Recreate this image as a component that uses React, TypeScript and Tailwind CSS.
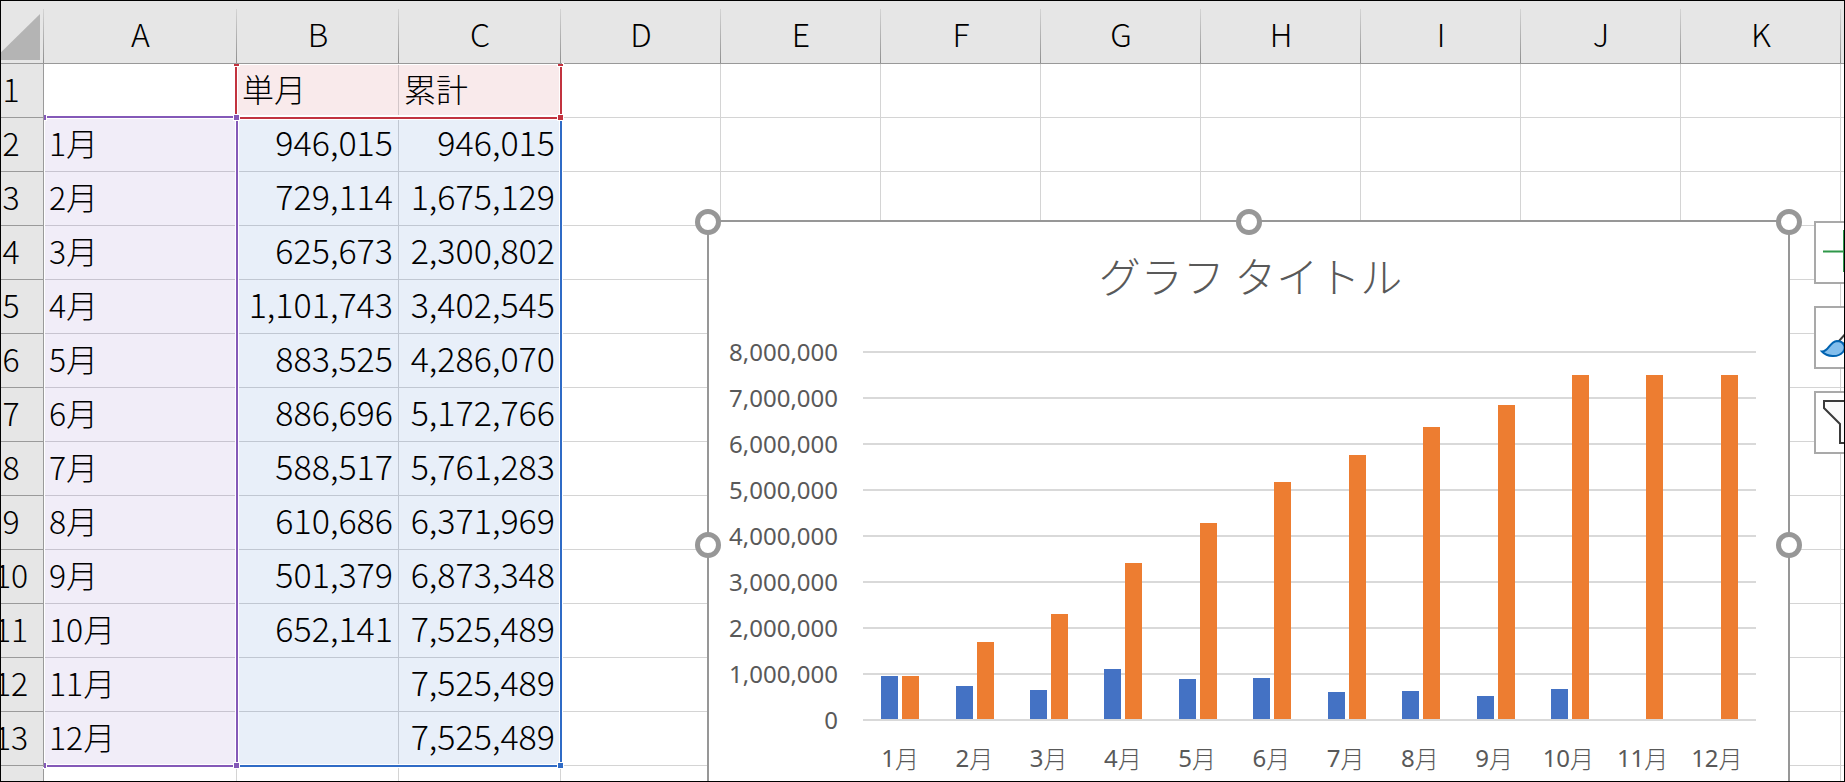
import { clsx } from "clsx";

// The last column only shows its left edge, so it carries no letter
const columns = ["A", "B", "C", "D", "E", "F", "G", "H", "I", "J", "K", ""];

const sales = [
    { month: "1月", single: 946015, total: 946015 },
    { month: "2月", single: 729114, total: 1675129 },
    { month: "3月", single: 625673, total: 2300802 },
    { month: "4月", single: 1101743, total: 3402545 },
    { month: "5月", single: 883525, total: 4286070 },
    { month: "6月", single: 886696, total: 5172766 },
    { month: "7月", single: 588517, total: 5761283 },
    { month: "8月", single: 610686, total: 6371969 },
    { month: "9月", single: 501379, total: 6873348 },
    { month: "10月", single: 652141, total: 7525489 },
    { month: "11月", single: null, total: 7525489 },
    { month: "12月", single: null, total: 7525489 },
];

const AXIS_MAX = 8000000;
const ticks = [8, 7, 6, 5, 4, 3, 2, 1, 0].map((n) => n * 1000000);

const format = (value: number | null) => (value === null ? "" : value.toLocaleString("en-US"));

const rows = [
    ["", "単月", "累計"],
    ...sales.map((s) => [s.month, format(s.single), format(s.total)]),
    ["", "", ""],
];

// Fill of a cell that belongs to one of the chart's source ranges
const cellStyle = (row: number, col: number) => {
    if (row === 0 && (col === 1 || col === 2)) return "bg-[#f9eaeb] border-[#d2c6c8]";
    if (row > 0 && row < 13 && col === 0) return "bg-[#f1edf8] border-[#c8c4d0]";
    if (row > 0 && row < 13 && col < 3) return "bg-[#e8eff9] border-[#c0c7d2]";
    return "bg-white border-[#d4d4d4]";
};

const Grid = () => (
    <table className="-ml-[21px] w-[2022px] table-fixed border-separate border-spacing-0 text-[32px] leading-[46px] text-black">
        <colgroup>
            <col className="w-[65px]" />
            <col className="w-[193px]" />
            <col className="w-[162px]" />
            <col className="w-[162px]" />
            {columns.slice(3).map((name) => (
                <col key={name} className="w-[160px]" />
            ))}
        </colgroup>
        <thead>
            <tr>
                <th className="h-16 border-b border-[#999999] bg-[#e6e6e6] bg-[linear-gradient(to_bottom,#d4d4d4,#8f8f8f)] bg-[length:1px_54px] bg-[position:right_bottom] bg-no-repeat p-0">
                    <button type="button" aria-label="すべて選択" className="flex h-[63px] w-[61px] items-end justify-end pb-[3px]">
                        <svg width="47" height="46" viewBox="0 0 47 46" className="block">
                            <path d="M47 0V46H0Z" fill="#b4b4b4" />
                        </svg>
                    </button>
                </th>
                {columns.map((name) => (
                    <th
                        key={name}
                        scope="col"
                        className="h-16 border-b border-[#999999] bg-[#e6e6e6] bg-[linear-gradient(to_bottom,#d4d4d4,#8f8f8f)] bg-[length:1px_54px] bg-[position:right_bottom] bg-no-repeat p-0 pt-0.5 text-center font-light"
                    >
                        {name}
                    </th>
                ))}
            </tr>
        </thead>
        <tbody>
            {rows.map((row, r) => (
                <tr key={r}>
                    <th scope="row" className="h-[54px] border-r border-b border-[#9a9a9a] bg-[#e6e6e6] p-0 pb-1.5 text-center font-light">
                        {r + 1}
                    </th>
                    {columns.map((name, c) => (
                        <td
                            key={name}
                            className={clsx(
                                "h-[54px] border-r border-b px-[5px] pt-0 pb-1.5 font-light whitespace-nowrap",
                                r > 0 && c > 0 && "text-right text-[34px]",
                                cellStyle(r, c)
                            )}
                        >
                            {row[c]}
                        </td>
                    ))}
                </tr>
            ))}
        </tbody>
    </table>
);

// Coloured outlines and grips of the three source ranges
const RangeOutlines = () => (
    <div className="pointer-events-none absolute top-16 left-11 grid grid-cols-[194px_324px] grid-rows-[52px_651px]">
        <div className="relative col-start-2 row-start-1 z-10 -mb-[3px] -ml-[3px] border-x-2 border-b-2 border-[#c2333f] ring-1 inset-ring-1 ring-white inset-ring-white">
            <span className="absolute top-0 -left-[3px] h-0.5 w-[5px] bg-[#c2333f] ring-1 ring-white" />
            <span className="absolute top-0 -right-[3px] h-0.5 w-[5px] bg-[#c2333f] ring-1 ring-white" />
            <span className="absolute -right-[3px] -bottom-[3px] size-[5px] bg-[#c2333f] ring-1 ring-white" />
        </div>
        <div className="relative col-start-1 row-start-2 z-20 border-y-2 border-r-2 border-[#8459b8] ring-1 inset-ring-1 ring-white inset-ring-white">
            <span className="absolute -top-[3px] left-0 h-[5px] w-0.5 bg-[#8459b8] ring-1 ring-white" />
            <span className="absolute -bottom-[3px] left-0 h-[5px] w-0.5 bg-[#8459b8] ring-1 ring-white" />
            <span className="absolute -top-[3px] -right-[3px] size-[5px] bg-[#8459b8] ring-1 ring-white" />
            <span className="absolute -right-[3px] -bottom-[3px] size-[5px] bg-[#8459b8] ring-1 ring-white" />
        </div>
        <div className="relative col-start-2 row-start-2 border-r-2 border-b-2 border-[#2f6bc6] ring-1 inset-ring-1 ring-white inset-ring-white">
            <span className="absolute -right-[3px] -bottom-[3px] size-[5px] bg-[#2f6bc6] ring-1 ring-white" />
        </div>
        {/* edges of the two header strips stay above the outlines */}
        <div className="absolute inset-x-0 -top-px z-30 h-px bg-[#999999]" />
        <div className="absolute inset-y-0 -left-px z-30 w-px bg-[#9a9a9a]" />
    </div>
);

const handles = [
    "top-0 left-0",
    "top-0 left-1/2",
    "top-0 left-full",
    "top-1/2 left-0",
    "top-1/2 left-full",
    "top-full left-0",
    "top-full left-1/2",
    "top-full left-full",
];

const Chart = () => (
    <section className="absolute top-[220px] left-[707px] h-[650px] w-[1083px] border-2 border-[#979797] bg-white text-[#595959]">
        <h2 className="pt-[25px] pl-1 text-center text-[42px] leading-[56px] font-light">グラフ タイトル</h2>

        <div className="mt-12 flex pr-8 pl-[15px] font-['Noto_Sans','Noto_Sans_CJK_JP',sans-serif] text-2xl">
            <div className="-mt-[22px] w-[114px] text-right">
                {ticks.map((t) => (
                    <div key={t} className="h-[46px] leading-[46px]">
                        {format(t)}
                    </div>
                ))}
            </div>
            <div className="ml-[25px] flex-1">
                <div className="relative h-[368px] pt-0.5">
                    <div className="absolute inset-x-0 top-0">
                        {ticks.map((t) => (
                            <div key={t} className="h-[46px] border-t-2 border-[#d9d9d9]" />
                        ))}
                    </div>
                    <div className="relative flex h-full">
                        {sales.map((s) => (
                            <div key={s.month} className="flex flex-1 items-end justify-center gap-1">
                                <div className="w-[17px] bg-[#4472c4]" style={{ height: `${((s.single ?? 0) / AXIS_MAX) * 100}%` }} />
                                <div className="w-[17px] bg-[#ed7d31]" style={{ height: `${(s.total / AXIS_MAX) * 100}%` }} />
                            </div>
                        ))}
                    </div>
                </div>
                <div className="mt-[21px] flex pr-0.5 leading-9">
                    {sales.map((s) => (
                        <div key={s.month} className="flex flex-1 justify-center whitespace-nowrap">
                            <span>{s.month.replace("月", "")}</span>
                            <span className="font-['Noto_Sans_CJK_JP',sans-serif] font-light">月</span>
                        </div>
                    ))}
                </div>
            </div>
        </div>

        <div className="absolute -inset-x-px inset-y-0">
            {handles.map((place) => (
                <span key={place} className={clsx("absolute size-[26px] -translate-1/2 rounded-full border-[5px] border-[#979797] bg-white", place)} />
            ))}
        </div>
    </section>
);

const ChartButtons = () => (
    <div className="absolute top-[221px] left-[1814px] flex flex-col gap-[22px]">
        <button type="button" aria-label="グラフ要素" className="size-[63px] border-2 border-[#a9a9a9] bg-white">
            <svg width="59" height="59" viewBox="0 0 59 59" className="block">
                <path d="M27 7H32V27.5H52V29.5H32V49H27V29.5H7V27.5H27Z" fill="#2f9749" />
            </svg>
        </button>
        <button type="button" aria-label="グラフ スタイル" className="size-[63px] border-2 border-[#a9a9a9] bg-white">
            <svg width="59" height="59" viewBox="0 0 59 59" className="block">
                <path d="M23 33L48 5L52 9L30 37Z" fill="#fafafa" stroke="#3a3a3a" strokeWidth="2" />
                <path d="M6 43.500C13 43.500 13 34 21 33C27 33 31 39 27 44C22 50 11 49 6 43.500Z" fill="#83beec" stroke="#0063b1" strokeWidth="2" />
            </svg>
        </button>
        <button type="button" aria-label="グラフ フィルター" className="size-[63px] border-2 border-[#a9a9a9] bg-white">
            <svg width="59" height="59" viewBox="0 0 59 59" className="block">
                <path d="M8 8H51V16L35 32V50H24V31L8 15Z" fill="#fafafa" stroke="#3a3a3a" strokeWidth="2" />
            </svg>
        </button>
    </div>
);

export default function App() {
    return (
        <main className="relative h-screen overflow-hidden bg-white font-['Noto_Sans_CJK_JP',sans-serif]">
            <Grid />
            <RangeOutlines />
            <Chart />
            <ChartButtons />
            <div className="pointer-events-none absolute inset-0 z-40 border border-black" />
        </main>
    );
}
